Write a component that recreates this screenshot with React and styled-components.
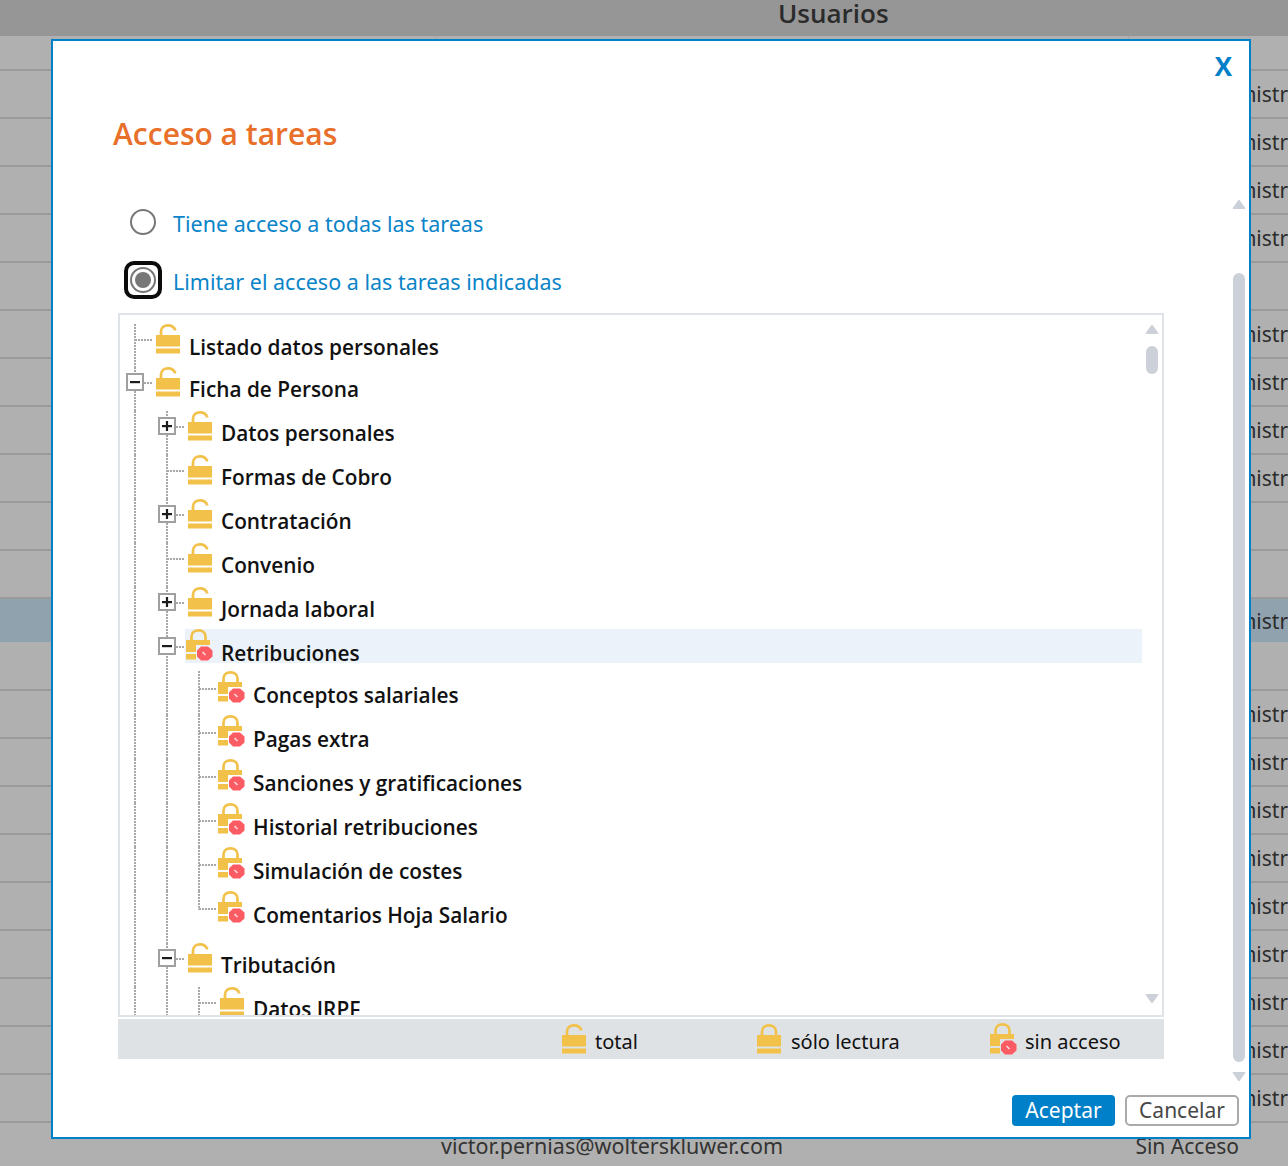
import styled, { createGlobalStyle } from "styled-components";

const BASE_FONT = '"Noto Sans", "Open Sans", sans-serif';
const STRONG_FONT = '"Open Sans", "Noto Sans", sans-serif';

const GlobalStyle = createGlobalStyle`
  html, body {
    margin: 0;
    padding: 0;
    background: #b0b0b0;
    font-family: ${BASE_FONT};
  }
  * {
    box-sizing: border-box;
  }
`;

const Page = styled.div`
  height: 1166px;
  overflow: hidden;
  position: relative;
  width: 1288px;
`;

const TopBar = styled.header`
  background: #969696;
  color: #2b2b2b;
  font-family: ${STRONG_FONT};
  font-size: 26px;
  font-weight: 600;
  height: 36px;
  line-height: 26px;
  padding-left: 778px;
`;

const TableHead = styled.div`
  border-bottom: 2px solid #9a9a9a;
  display: grid;
  grid-template-columns: 436px 692px 1fr;
  height: 35px;
`;

const HeadCell = styled.div`
  border-left: 1px solid #a4a4a4;
  height: 4px;
`;

const TableRow = styled.div`
  align-items: center;
  background: ${(p) => (p.$selected ? "#8fa2ae" : "transparent")};
  border-bottom: ${(p) => (p.$selected ? "0" : "2px solid #9a9a9a")};
  color: #2b2b2b;
  display: flex;
  font-size: 21px;
  height: ${(p) => p.$height}px;
  overflow: hidden;
  white-space: nowrap;
`;

const RoleText = styled.span`
  margin-left: 1192px;
`;

const LastRow = styled.div`
  color: #333;
  display: flex;
  font-size: 21.5px;
  height: 43px;
  line-height: 46px;
  padding-left: 441px;
`;

const LastRole = styled.span`
  font-size: 21px;
  margin-left: auto;
  padding-right: 49px;
`;

const Modal = styled.section`
  background: #fff;
  border: 2px solid #0080c8;
  display: flex;
  flex-direction: column;
  height: 1100px;
  left: 51px;
  position: absolute;
  top: 39px;
  width: 1200px;
`;

const CloseLink = styled.a`
  align-self: flex-end;
  color: #0080c8;
  font-family: ${STRONG_FONT};
  font-size: 26px;
  font-weight: 700;
  line-height: 30px;
  margin: 10px 17px 0 0;
`;

const Title = styled.h1`
  color: #e8702a;
  font-family: ${STRONG_FONT};
  font-size: 30px;
  font-weight: 600;
  line-height: 40px;
  margin: 33px 0 0 60px;
`;

const RadioRow = styled.label`
  align-items: center;
  color: #0a84c8;
  display: flex;
  font-size: 21.5px;
  gap: 17px;
  height: 30px;
  margin: ${(p) => p.$top}px 0 0 77px;
`;

const RadioMark = styled.span`
  align-items: center;
  border: 2px solid #777;
  border-radius: 50%;
  display: flex;
  flex: none;
  height: 26px;
  justify-content: center;
  margin-top: -2px;
  position: relative;
  width: 26px;
`;

const FocusRing = styled.span`
  border: 4px solid #0b0b0b;
  border-radius: 10px;
  inset: -8px;
  position: absolute;
`;

const RadioDot = styled.span`
  background: #777;
  border-radius: 50%;
  height: 16px;
  width: 16px;
`;

const TreeBox = styled.div`
  border: 2px solid #dfe3e8;
  flex: none;
  height: 704px;
  margin: 17px 0 0 65px;
  overflow: hidden;
  padding-top: 9px;
  position: relative;
  width: 1046px;
`;

const TreeRow = styled.div`
  display: flex;
  height: ${(p) => p.$height}px;
  padding-left: ${(p) => 36 + p.$level * 32}px;
  padding-right: 20px;
  position: relative;
`;

const Guide = styled.span`
  background: repeating-linear-gradient(to bottom, #a8a8a8 0 2px, transparent 2px 3px);
  bottom: ${(p) => (p.$height ? "auto" : "0")};
  height: ${(p) => (p.$height ? `${p.$height}px` : "auto")};
  left: ${(p) => p.$left}px;
  position: absolute;
  top: 0;
  width: 2px;
`;

const Elbow = styled.span`
  background: repeating-linear-gradient(to right, #a8a8a8 0 2px, transparent 2px 3px);
  height: 2px;
  left: ${(p) => p.$left}px;
  position: absolute;
  top: ${(p) => p.$top}px;
  width: 17px;
`;

const Toggle = styled.span`
  align-items: center;
  background: #fff;
  border: 2px solid #a0a0a0;
  display: flex;
  height: 18px;
  justify-content: center;
  left: ${(p) => p.$left}px;
  position: absolute;
  top: ${(p) => p.$top}px;
  width: 18px;
`;

const NodeBody = styled.div`
  align-items: flex-start;
  background: ${(p) => (p.$selected ? "#ebf2f9" : "transparent")};
  display: flex;
  flex: 1;
  height: 34px;
  margin-left: ${(p) => (p.$selected ? "-3px" : "0")};
  padding-left: ${(p) => (p.$selected ? "3px" : "0")};
`;

const NodeLabel = styled.span`
  color: #111;
  font-family: ${STRONG_FONT};
  font-size: 20.8px;
  font-weight: 600;
  line-height: 30px;
  margin-left: ${(p) => (p.$blocked ? "7px" : "9px")};
  margin-top: ${(p) => p.$drop}px;
  position: relative;
  white-space: nowrap;
`;

const ScrollArrow = styled.svg`
  display: block;
  left: ${(p) => p.$left}px;
  position: absolute;
  top: ${(p) => p.$top}px;
`;

const ScrollThumb = styled.span`
  background: #ccd1d9;
  border-radius: 6px;
  height: ${(p) => p.$height}px;
  left: ${(p) => p.$left}px;
  position: absolute;
  top: ${(p) => p.$top}px;
  width: 12px;
`;

const Legend = styled.div`
  align-items: center;
  background: #dfe2e5;
  display: flex;
  flex: none;
  height: 40px;
  margin: 2px 0 0 65px;
  padding-left: 444px;
  width: 1046px;
`;

const LegendItem = styled.div`
  align-items: center;
  color: #111;
  display: flex;
  font-size: 20px;
  gap: ${(p) => p.$gap || 9}px;
  width: ${(p) => p.$width}px;
`;

const LegendText = styled.span`
  padding-top: 5px;
`;

const Footer = styled.div`
  display: flex;
  gap: 10px;
  justify-content: flex-end;
  margin-top: 36px;
  padding-right: 10px;
`;

const PrimaryButton = styled.button`
  background: #0080c8;
  border: 0;
  border-radius: 4px;
  color: #fff;
  font-family: inherit;
  font-size: 21px;
  height: 31px;
  line-height: 31px;
  padding: 0;
  width: 103px;
`;

const SecondaryButton = styled.button`
  background: #fff;
  border: 2px solid #aaa;
  border-radius: 5px;
  color: #474747;
  font-family: inherit;
  font-size: 21px;
  height: 31px;
  line-height: 25px;
  padding: 0;
  width: 114px;
`;

function LockIcon({ open }) {
  return (
    <svg width="24" height="30" viewBox="0 0 24 30" style={{ flex: "none" }}>
      <path
        d={open ? "M5 12V7.5C5 4 8 1.4 12 1.4c3.6 0 6.2 1.8 7.4 5" : "M5 12V7.5C5 4 8 1.4 12 1.4S19 4 19 7.5V12"}
        fill="none"
        stroke="#f2c14a"
        strokeWidth="2.7"
      />
      <rect x="0" y="11" width="24" height="11.5" fill="#f2c14a" />
      <rect x="0" y="24.5" width="24" height="5" fill="#f2c14a" />
    </svg>
  );
}

function BlockedLockIcon({ flush }) {
  return (
    <svg width="28" height="32" viewBox="0 0 28 32" style={{ flex: "none", marginLeft: flush ? 0 : -2 }}>
      <path d="M5.5 12V7.5C5.5 4 8.5 1.4 12.5 1.4S19.5 4 19.5 7.5V12" fill="none" stroke="#f2c14a" strokeWidth="2.7" />
      <rect x="0" y="11" width="24" height="5" fill="#f2c14a" />
      <rect x="0" y="16" width="10" height="7" fill="#f2c14a" />
      <rect x="0" y="25" width="10" height="5.5" fill="#f2c14a" />
      <path d="M15 17.5h7l4.5 4v6l-4.5 4h-7l-4-4v-6z" fill="#fb5b62" />
      <path d="M16.5 23l3 3" stroke="#ffd9db" strokeWidth="1.6" />
    </svg>
  );
}

function ToggleIcon({ expanded }) {
  return (
    <svg width="12" height="12" viewBox="0 0 12 12">
      <rect x="1" y="5" width="10" height="2.2" fill="#1c1c1c" />
      {!expanded && <rect x="4.9" y="1" width="2.2" height="10" fill="#1c1c1c" />}
    </svg>
  );
}

function Arrow({ left, top, down }) {
  return (
    <ScrollArrow $left={left} $top={top} width="14" height="11" viewBox="0 0 14 11">
      <path
        d={down ? "M1.5 1h11c.8 0 1 .6.6 1.2L7.6 10c-.3.4-.9.4-1.2 0L.9 2.2C.5 1.6.7 1 1.5 1z" : "M1.5 10h11c.8 0 1-.6.6-1.2L7.6 1c-.3-.4-.9-.4-1.2 0L.9 8.8c-.4.6-.2 1.2.6 1.2z"}
        fill="#ccd1d9"
      />
    </ScrollArrow>
  );
}

// level, row height, label, state
const NODES = [
  { level: 0, height: 43, label: "Listado datos personales", nudge: 1 },
  { level: 0, height: 44, label: "Ficha de Persona", toggle: "minus" },
  { level: 1, height: 44, label: "Datos personales", toggle: "plus" },
  { level: 1, height: 44, label: "Formas de Cobro" },
  { level: 1, height: 44, label: "Contratación", toggle: "plus" },
  { level: 1, height: 44, label: "Convenio" },
  { level: 1, height: 42, label: "Jornada laboral", toggle: "plus" },
  { level: 1, height: 42, label: "Retribuciones", toggle: "minus", blocked: true, selected: true },
  { level: 2, height: 44, label: "Conceptos salariales", blocked: true },
  { level: 2, height: 44, label: "Pagas extra", blocked: true },
  { level: 2, height: 44, label: "Sanciones y gratificaciones", blocked: true },
  { level: 2, height: 44, label: "Historial retribuciones", blocked: true },
  { level: 2, height: 44, label: "Simulación de costes", blocked: true },
  { level: 2, height: 52, label: "Comentarios Hoja Salario", blocked: true, last: true },
  { level: 1, height: 44, label: "Tributación", toggle: "minus" },
  { level: 2, height: 44, label: "Datos IRPF" },
];

const ROLE_ROWS = [
  { height: 48, role: true },
  { height: 48, role: true },
  { height: 48, role: true },
  { height: 48, role: true },
  { height: 48 },
  { height: 48, role: true },
  { height: 48, role: true },
  { height: 48, role: true },
  { height: 48, role: true },
  { height: 48 },
  { height: 48 },
  { height: 43, role: true, selected: true },
  { height: 49 },
  { height: 48, role: true },
  { height: 48, role: true },
  { height: 48, role: true },
  { height: 48, role: true },
  { height: 48, role: true },
  { height: 48, role: true },
  { height: 48, role: true },
  { height: 48, role: true },
  { height: 48, role: true },
];

function TreeNode({ node, index }) {
  const lockLeft = 36 + node.level * 32;
  const elbowTop = node.blocked ? 17 : 15;
  const drop = (node.blocked ? 9 : 7) + (node.nudge || 0);
  return (
    <TreeRow $height={node.height} $level={node.level}>
      <Guide $left={14} />
      {index >= 2 && <Guide $left={46} />}
      {node.level === 2 && <Guide $left={78} $height={node.last ? 19 : undefined} />}
      <Elbow $left={lockLeft - 21} $top={elbowTop} />
      {node.toggle && (
        <Toggle $left={lockLeft - 30} $top={elbowTop - 9}>
          <ToggleIcon expanded={node.toggle === "minus"} />
        </Toggle>
      )}
      <NodeBody $selected={node.selected}>
        {node.blocked ? <BlockedLockIcon /> : <LockIcon open />}
        <NodeLabel $blocked={node.blocked} $drop={drop}>{node.label}</NodeLabel>
      </NodeBody>
    </TreeRow>
  );
}

export default function App() {
  return (
    <Page>
      <GlobalStyle />
      <TopBar>Usuarios</TopBar>
      <TableHead>
        <div />
        <HeadCell />
        <HeadCell />
      </TableHead>
      {ROLE_ROWS.map((row, i) => (
        <TableRow key={i} $height={row.height} $selected={row.selected}>
          {row.role && <RoleText>Administrador</RoleText>}
        </TableRow>
      ))}
      <LastRow>
        victor.pernias@wolterskluwer.com
        <LastRole>Sin Acceso</LastRole>
      </LastRow>

      <Modal>
        <CloseLink>X</CloseLink>
        <Title>Acceso a tareas</Title>
        <RadioRow $top={54}>
          <RadioMark />
          Tiene acceso a todas las tareas
        </RadioRow>
        <RadioRow $top={28}>
          <RadioMark>
            <FocusRing />
            <RadioDot />
          </RadioMark>
          Limitar el acceso a las tareas indicadas
        </RadioRow>
        <TreeBox>
          {NODES.map((node, i) => (
            <TreeNode key={node.label} node={node} index={i} />
          ))}
          <Arrow left={1025} top={9} />
          <ScrollThumb $left={1026} $top={31} $height={28} />
          <Arrow left={1025} top={678} down />
        </TreeBox>
        <Legend>
          <LegendItem $width={195}>
            <LockIcon open />
            <LegendText>total</LegendText>
          </LegendItem>
          <LegendItem $width={233} $gap={10}>
            <LockIcon />
            <LegendText>sólo lectura</LegendText>
          </LegendItem>
          <LegendItem $gap={7}>
            <BlockedLockIcon flush />
            <LegendText>sin acceso</LegendText>
          </LegendItem>
        </Legend>
        <Footer>
          <PrimaryButton>Aceptar</PrimaryButton>
          <SecondaryButton>Cancelar</SecondaryButton>
        </Footer>
        <Arrow left={1179} top={158} />
        <ScrollThumb $left={1180} $top={232} $height={789} />
        <Arrow left={1179} top={1030} down />
      </Modal>
    </Page>
  );
}
